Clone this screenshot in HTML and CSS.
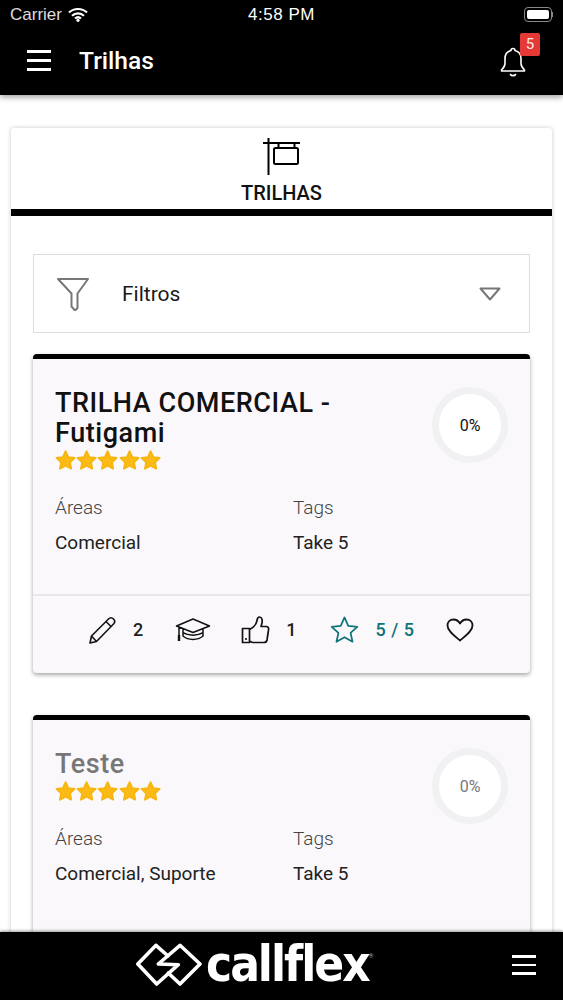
FILE: index.html
```html
<!DOCTYPE html>
<html lang="pt">
<head>
<meta charset="utf-8">
<title>Trilhas</title>
<link rel="stylesheet" href="styles.css">
</head>
<body>
<svg class="defs" width="0" height="0" aria-hidden="true">
  <symbol id="star" viewBox="0 0 24 24"><path d="M12 2l3.100 6.700 7.200 1-5.200 5 1.300 7.200L12 18.400 5.600 21.900l1.300-7.200-5.200-5 7.200-1z" fill="#fbbb14" stroke="#f7b50f" stroke-width="2" stroke-linejoin="round"/></symbol>
</svg>
<div class="app">
  <header class="top">
    <div class="status">
      <div class="carrier"><span>Carrier</span>
        <svg class="wifi" viewBox="0 0 20 15" width="20" height="15"><path d="M1 5.500C6 .8 14 .8 19 5.500M4 8.700c3.500-3.200 8.500-3.200 12 0M7 11.500c1.800-1.500 4.200-1.500 6 0" fill="none" stroke="#fff" stroke-width="2.200"/><circle cx="10" cy="13.300" r="1.600" fill="#fff"/></svg>
      </div>
      <div class="clock">4:58 PM</div>
      <div class="battery"><span class="battery-body"><span class="battery-fill"></span></span><span class="battery-tip"></span></div>
    </div>
    <div class="nav">
      <div class="nav-left">
        <div class="burger"><i></i><i></i><i></i></div>
        <div class="nav-title">Trilhas</div>
      </div>
      <div class="bell-wrap">
        <svg viewBox="0 0 26 30" width="26" height="30"><path d="M13 1.500c-1.300 0-2 .8-2 2-4 1-6 4.300-6 8v5c0 3-1.500 4.500-3.500 6.500v1h23v-1c-2-2-3.500-3.500-3.500-6.500v-5c0-3.700-2-7-6-8 0-1.200-.7-2-2-2zM10.500 27.500c.8 1.500 4.200 1.500 5 0" fill="none" stroke="#fff" stroke-width="1.600" stroke-linejoin="round" stroke-linecap="round"/></svg>
        <span class="badge">5</span>
      </div>
    </div>
  </header>

  <main class="content">
    <section class="panel">
      <div class="tab">
        <svg viewBox="0 0 37 37" width="37" height="37"><path d="M0 5h37M5.500 0v37M15.500 5v5M31.500 5v5" fill="none" stroke="#000" stroke-width="2"/><rect x="11" y="10" width="24" height="16" rx="1.500" fill="none" stroke="#000" stroke-width="2"/></svg>
        <div class="tab-label">TRILHAS</div>
      </div>

      <div class="filter">
        <div class="filter-left">
          <svg viewBox="0 0 34 34" width="34" height="34"><path d="M2 2h30L21.500 16.500v14.500l-2.500 2.500-3.500-4V16.500z" fill="none" stroke="#777" stroke-width="2" stroke-linejoin="round"/></svg>
          <span class="filter-label">Filtros</span>
        </div>
        <svg viewBox="0 0 22 14" width="22" height="14"><path d="M1.500 1.500h19L11 12.500z" fill="none" stroke="#777" stroke-width="2" stroke-linejoin="round"/></svg>
      </div>

      <article class="card">
        <div class="card-body">
          <div class="card-head">
            <div class="card-info">
              <h2 class="card-title">TRILHA COMERCIAL - Futigami</h2>
              <div class="stars"><svg><use href="#star"/></svg><svg><use href="#star"/></svg><svg><use href="#star"/></svg><svg><use href="#star"/></svg><svg><use href="#star"/></svg></div>
            </div>
            <div class="ring">0%</div>
          </div>
          <div class="meta">
            <div class="meta-col"><div class="meta-label">Áreas</div><div class="meta-value">Comercial</div></div>
            <div class="meta-col"><div class="meta-label">Tags</div><div class="meta-value">Take 5</div></div>
          </div>
        </div>
        <div class="card-foot">
          <svg class="ico-pencil" viewBox="0 0 30 30" width="30" height="30"><path d="M2 28l1.500-7L20.500 4c1.500-1.500 3.500-1.500 5 0s1.500 3.500 0 5L8.500 26.500zM18 6.500l5.500 5.500M3.500 21l5 5.500" fill="none" stroke="#111" stroke-width="1.600" stroke-linejoin="round"/></svg>
          <span class="num num-pencil">2</span>
          <svg class="ico-cap" viewBox="0 0 36 24" width="36" height="24"><path d="M18 1L1.500 8 18 14.500 34.500 8zM8 11v7c5 4.500 15 4.500 20 0v-7M8 14.500c5 3.500 15 3.500 20 0M4 9.500v9" fill="none" stroke="#111" stroke-width="1.500" stroke-linejoin="round"/><rect x="2.800" y="17" width="2.400" height="6" fill="#111"/></svg>
          <svg class="ico-thumb" viewBox="0 0 30 30" width="30" height="30"><path d="M1.500 13.500h7v14h-7zM8.500 14.500c4-2 7-6 7.500-9 .3-2 1-3.500 2.500-3.500 2.500 0 3 3.500 2.500 6l-1 3.500h5c2 0 3 1.500 2.500 3.500l-1.500 10c-.3 1.500-1.500 2.500-3 2.500H12c-1.500 0-2.500-1-3.500-1.500" fill="none" stroke="#111" stroke-width="1.700" stroke-linejoin="round"/><circle cx="5" cy="24" r="1.100" fill="#111"/></svg>
          <span class="num num-thumb">1</span>
          <svg class="ico-star" viewBox="0 0 30 28" width="29" height="27"><path d="M15 1.500l3.900 8.700 9.400 1-7 6.300 2 9.200L15 22l-8.300 4.700 2-9.200-7-6.300 9.400-1z" fill="none" stroke="#0f7478" stroke-width="1.800" stroke-linejoin="round"/></svg>
          <span class="num num-rate">5 / 5</span>
          <svg class="ico-heart" viewBox="0 0 28 24" width="28" height="24"><path d="M14 22.500C8 17.500 1.500 13 1.500 7.500 1.500 4 4 1.500 7.500 1.500c2.700 0 5 1.500 6.500 4 1.500-2.500 3.800-4 6.500-4 3.500 0 6 2.500 6 6 0 5.500-6.500 10-12.500 15z" fill="none" stroke="#111" stroke-width="1.800" stroke-linejoin="round"/></svg>
        </div>
      </article>

      <article class="card card-second">
        <div class="card-body">
          <div class="card-head">
            <div class="card-info">
              <h2 class="card-title card-title-muted">Teste</h2>
              <div class="stars"><svg><use href="#star"/></svg><svg><use href="#star"/></svg><svg><use href="#star"/></svg><svg><use href="#star"/></svg><svg><use href="#star"/></svg></div>
            </div>
            <div class="ring ring-muted">0%</div>
          </div>
          <div class="meta">
            <div class="meta-col"><div class="meta-label">Áreas</div><div class="meta-value">Comercial, Suporte</div></div>
            <div class="meta-col"><div class="meta-label">Tags</div><div class="meta-value">Take 5</div></div>
          </div>
        </div>
      </article>
    </section>
  </main>

  <footer class="bottom">
    <div class="brand">
      <svg viewBox="0 0 66 44" width="66" height="44"><path d="M20 2.300L32 13M20 2.300L1.800 21 20.700 41 42.300 21.700 22.300 21 44 2.300 64 21 44 41 32.300 30" fill="none" stroke="#fff" stroke-width="3.600" stroke-linejoin="round" stroke-linecap="round"/></svg>
      <span class="brand-name">callflex</span><span class="brand-mark">®</span>
    </div>
    <div class="burger burger-small"><i></i><i></i><i></i></div>
  </footer>
</div>
</body>
</html>
```

FILE: styles.css
```css
* { box-sizing: border-box; }
html, body { margin: 0; padding: 0; background: #fff; }
body { font-family: Roboto, "Liberation Sans", sans-serif; color: #111; }
.defs { display: block; height: 0; }
.app { width: 563px; height: 1000px; display: flex; flex-direction: column; overflow: hidden; }

.top { background: #000; color: #fff; height: 95px; flex: none; box-shadow: 0 2px 6px rgba(0,0,0,.4); position: relative; z-index: 2; }
.status { height: 29px; display: grid; grid-template-columns: 1fr auto 1fr; align-items: center; padding: 0 10px; }
.carrier { display: flex; align-items: center; gap: 6px; font-size: 17px; color: #ddd; font-family: "Liberation Sans", sans-serif; }
.clock { font-size: 17px; font-family: "Liberation Sans", sans-serif; letter-spacing: .5px; }
.battery { justify-self: end; display: flex; align-items: center; }
.battery-body { width: 28px; height: 15px; border: 1px solid #888; border-radius: 4px; padding: 2px; display: block; }
.battery-fill { display: block; height: 100%; background: #fff; border-radius: 2px; }
.battery-tip { width: 1px; height: 5px; background: #888; }

.nav { display: flex; justify-content: space-between; align-items: center; height: 63px; padding: 0 22px 0 27px; }
.nav-left { display: flex; align-items: center; gap: 28px; }
.nav-title { font-size: 24.600px; font-weight: 500; }
.burger { width: 24px; display: flex; flex-direction: column; gap: 6px; }
.burger i { display: block; height: 3px; background: #fff; }
.bell-wrap { position: relative; width: 26px; height: 30px; margin-top: 2px; margin-right: 15px; }
.bell-wrap svg { display: block; }
.badge { position: absolute; left: 20px; top: -14px; width: 20px; height: 23px; background: #e53935; color: #fbeaea; border-radius: 2px; font-size: 15px; display: flex; align-items: center; justify-content: center; }

.content { flex: 1; min-height: 0; overflow: hidden; padding: 33px 11px 0; }
.panel { background: #fff; border-radius: 3px; box-shadow: 0 0 4px rgba(0,0,0,.22); padding-bottom: 40px; }
.tab { height: 88px; border-bottom: 7px solid #000; display: flex; flex-direction: column; align-items: center; padding-top: 10px; }
.tab svg { display: block; }
.tab-label { font-size: 20px; font-weight: 500; color: #111; margin-top: 6px; line-height: 24px; }

.filter { margin: 38px 22px 21px; height: 79px; border: 1px solid #ddd; display: flex; align-items: center; justify-content: space-between; padding: 0 28px 0 22px; }
.filter-left { display: flex; align-items: center; gap: 32px; }
.filter-left svg { display: block; }
.filter-label { font-size: 21px; color: #1a1a1a; }

.card { margin: 0 22px; background: #faf8fb; border-top: 5px solid #000; border-radius: 4px; box-shadow: 0 2px 4px rgba(0,0,0,.35); }
.card-second { margin-top: 42px; }
.card-body { padding: 29px 22px 0; height: 235px; }
.card-head { display: flex; justify-content: space-between; align-items: flex-start; }
.card-info { width: 300px; }
.card-title { margin: 0; font-size: 27px; line-height: 30px; font-weight: 500; letter-spacing: .55px; color: #111; }
.card-title-muted { color: #777; }
.stars { display: flex; height: 24px; margin-top: 1px; }
.stars svg { width: 21.200px; height: 22px; display: block; }
.ring { width: 76px; height: 76px; border-radius: 50%; border: 7px solid #f1f0f2; background: #fff; display: flex; align-items: center; justify-content: center; font-size: 16px; color: #111; margin-top: -1px; margin-bottom: -30px; flex: none; }
.ring-muted { color: #777; }
.meta { display: flex; margin-top: 23px; }
.meta-col { width: 238px; flex: none; }
.meta-label { font-size: 19px; font-weight: 300; color: #444; line-height: 24px; }
.meta-value { font-size: 19px; color: #222; line-height: 24px; margin-top: 11px; }

.card-foot { height: 79px; border-top: 2px solid #e8e8ea; display: flex; align-items: center; padding: 0 0 10px 55px; }
.card-foot svg { display: block; flex: none; }
.num { font-size: 18px; font-weight: 500; color: #222; }
.num-pencil { margin-left: 15px; }
.ico-cap { margin-left: 32px; }
.ico-thumb { margin-left: 30px; }
.num-thumb { margin-left: 15px; }
.ico-star { margin-left: 34px; }
.num-rate { margin-left: 16px; color: #0f7478; letter-spacing: .5px; }
.ico-heart { margin-left: 32px; }

.bottom { flex: none; height: 68px; background: #000; display: flex; align-items: center; justify-content: space-between; padding: 0 27px 2px 136px; position: relative; z-index: 2; box-shadow: 0 -1px 3px rgba(0,0,0,.4); }
.brand { display: flex; align-items: center; color: #fff; }
.brand svg { display: block; }
.brand-name { font-family: "DejaVu Sans", sans-serif; font-weight: 700; font-stretch: condensed; font-size: 49px; line-height: 50px; margin-left: 4px; letter-spacing: -2px; }
.brand-mark { font-size: 6px; align-self: flex-start; margin-top: 12px; color: #aaa; }
.burger-small { width: 24px; gap: 6px; }
.burger-small i { height: 2.500px; }
```
